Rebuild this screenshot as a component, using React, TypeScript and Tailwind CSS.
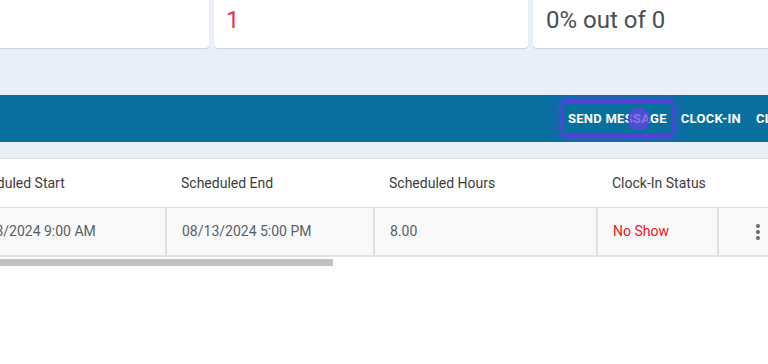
import React from "react";

export default function App() {
  return (
    <div
      className="w-[768px] h-[364px] overflow-hidden bg-white"
      style={{ fontFamily: "Roboto, 'Liberation Sans', sans-serif" }}
    >
      {/* top band */}
      <div className="bg-[#e8eff8] h-[158px] flex flex-col">
        <div className="flex gap-[5px] ml-[-105px] h-[48px]">
          <div className="w-[314px] shrink-0 bg-white rounded-b-[4px] shadow-[0_1px_1px_rgba(0,0,0,0.12)]" />
          <div className="w-[314px] shrink-0 bg-white rounded-b-[4px] shadow-[0_1px_1px_rgba(0,0,0,0.12)] flex items-center pl-[12px] pb-[8px]">
            <span className="text-[24px] text-[#e8344e] leading-none">1</span>
          </div>
          <div className="w-[314px] shrink-0 bg-white rounded-b-[4px] shadow-[0_1px_1px_rgba(0,0,0,0.12)] flex items-center pl-[13px] pb-[8px]">
            <span className="text-[24px] text-[#4a4f57] leading-none">0% out of 0</span>
          </div>
        </div>
        <div className="mt-[47px] h-[47px] bg-[#07709f] flex items-center pl-[561px] overflow-hidden">
          <div className="flex items-center shrink-0">
            <div className="relative h-[37px] rounded-[6px] border-[3px] border-[#5541d9] shadow-[0_0_10px_4px_rgba(90,70,230,0.45)] flex items-center pl-[4px] pr-[4px]">
              <span className="text-[13px] font-bold text-white tracking-[0.02em] leading-none whitespace-nowrap">
                SEND MESSAGE
              </span>
              <span className="absolute left-[64px] top-[5px] w-[22px] h-[22px] rounded-full bg-[rgba(96,70,220,0.75)] border-[2px] border-[#5a46dc]" />
            </div>
            <span className="ml-[7px] text-[13px] font-bold text-white tracking-[0.02em] leading-none whitespace-nowrap">
              CLOCK-IN
            </span>
            <span className="ml-[15px] text-[13px] font-bold text-white tracking-[0.02em] leading-none whitespace-nowrap">
              CLOCK-OUT
            </span>
          </div>
        </div>
      </div>

      {/* table */}
      <div className="ml-[-50px] border-t border-[#e0e0e0]">
        <div className="flex h-[49px] items-center text-[14px] text-[#3c3c3c] border-b border-[#e0e0e0] bg-white">
          <div className="w-[215px] shrink-0 pl-[16px]">Scheduled Start</div>
          <div className="w-[208px] shrink-0 pl-[16px]">Scheduled End</div>
          <div className="w-[223px] shrink-0 pl-[16px]">Scheduled Hours</div>
          <div className="w-[121px] shrink-0 pl-[16px]">Clock-In Status</div>
          <div className="w-[100px] shrink-0" />
        </div>
        <div className="flex h-[49px] text-[14px] text-[#5a5f66] border-b-2 border-[#e3e3e3] bg-[#f9f9f9]">
          <div className="w-[215px] shrink-0 pl-[16px] flex items-center">08/13/2024 9:00 AM</div>
          <div className="w-[208px] shrink-0 pl-[15px] flex items-center border-l-2 border-[#e0e0e0]">
            08/13/2024 5:00 PM
          </div>
          <div className="w-[223px] shrink-0 pl-[15px] flex items-center border-l-2 border-[#e0e0e0]">
            8.00
          </div>
          <div className="w-[121px] shrink-0 pl-[15px] flex items-center border-l-2 border-[#e0e0e0] text-[#f0141e]">
            No Show
          </div>
          <div className="w-[100px] shrink-0 flex items-center border-l-2 border-[#e0e0e0] pl-[37px]">
            <svg width="4" height="16" viewBox="0 0 4 16">
              <circle cx="2" cy="2" r="2" fill="#6b6b6b" />
              <circle cx="2" cy="8" r="2" fill="#6b6b6b" />
              <circle cx="2" cy="14" r="2" fill="#6b6b6b" />
            </svg>
          </div>
        </div>
      </div>
      <div className="mt-[2px] h-[7px] w-[333px] bg-[#c1c1c1]" />
    </div>
  );
}
